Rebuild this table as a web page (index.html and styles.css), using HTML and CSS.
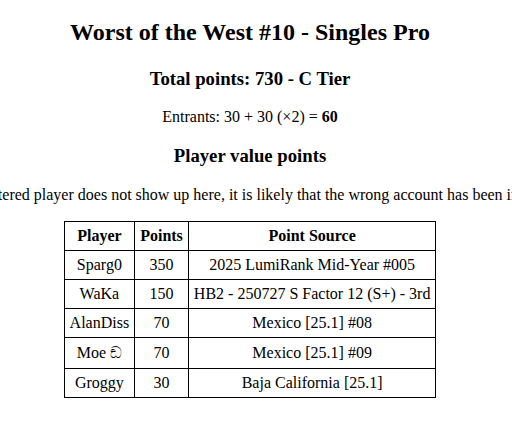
FILE: index.html
```html
<!DOCTYPE html>
<html>
<head>
<meta charset="utf-8">
<link rel="stylesheet" href="styles.css">
</head>
<body>
<div class="page">
  <h1 class="title">Worst of the West #10 - Singles Pro</h1>
  <h2 class="total">Total points: 730 - C Tier</h2>
  <p class="entrants">Entrants: 30 + 30 (×2) = <b>60</b></p>
  <h3 class="section">Player value points</h3>
  <p class="note">If a registered player does not show up here, it is likely that the wrong account has been inputted</p>
  <table class="points">
    <thead>
      <tr><th>Player</th><th>Points</th><th>Point Source</th></tr>
    </thead>
    <tbody>
      <tr><td>Sparg0</td><td>350</td><td>2025 LumiRank Mid-Year #005</td></tr>
      <tr><td>WaKa</td><td>150</td><td>HB2 - 250727 S Factor 12 (S+) - 3rd</td></tr>
      <tr><td>AlanDiss</td><td>70</td><td>Mexico [25.1] #08</td></tr>
      <tr class="tall"><td>Moe ඞ</td><td>70</td><td>Mexico [25.1] #09</td></tr>
      <tr><td>Groggy</td><td>30</td><td>Baja California [25.1]</td></tr>
    </tbody>
  </table>
</div>
</body>
</html>
```
FILE: styles.css
```css
html, body {
  margin: 0;
  padding: 0;
  background: #fff;
  overflow: hidden;
}
body {
  font-family: "Liberation Serif", "Times New Roman", serif;
  color: #000;
  font-size: 16px;
}
.page {
  width: 500px;
  display: flex;
  flex-direction: column;
  align-items: center;
  text-align: center;
  padding-top: 19px;
}
.title {
  font-size: 24px;
  margin: 0 0 21.5px;
  white-space: nowrap;
}
.total {
  font-size: 18.72px;
  margin: 0 0 18.5px;
  white-space: nowrap;
}
.entrants {
  margin: 0 0 18.5px;
  white-space: nowrap;
}
.section {
  font-size: 18.72px;
  margin: 0 0 19.5px;
  white-space: nowrap;
}
.note {
  margin: 0 0 16.5px;
  white-space: nowrap;
}
.points {
  border-collapse: collapse;
}
.points th, .points td {
  border: 1px solid #000;
  padding: 5px;
  line-height: 18px;
  text-align: center;
}
.points .tall td {
  padding-top: 6px;
  padding-bottom: 6.5px;
}
```
